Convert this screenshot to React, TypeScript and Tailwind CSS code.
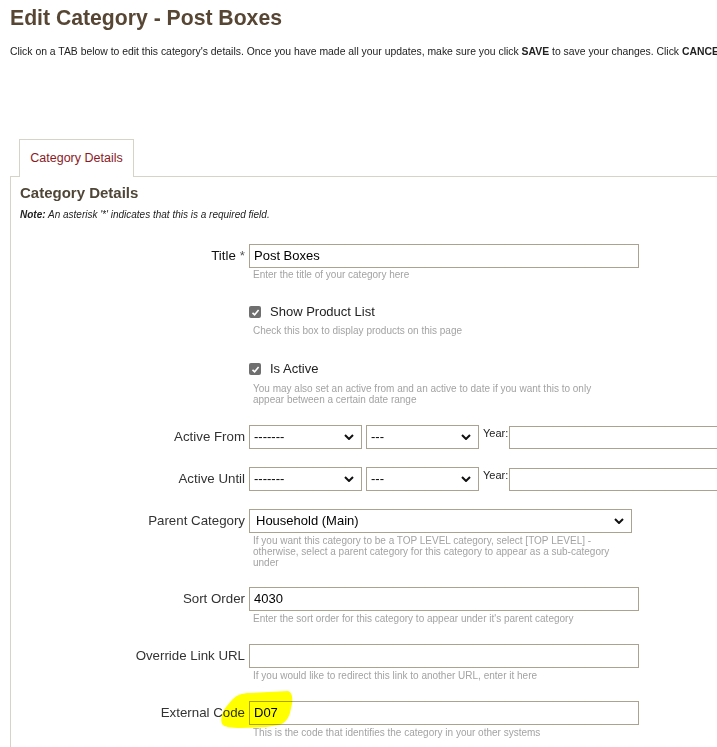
import React from "react"

const borderTan = "border-[#aba38f]"

function Chevron() {
  return (
    <svg width="10" height="6" viewBox="0 0 10 6" className="shrink-0">
      <path d="M1 1 L5 5 L9 1" fill="none" stroke="#111" strokeWidth="2" />
    </svg>
  )
}

function FakeSelect({ value, className }: { value: string; className: string }) {
  return (
    <div
      className={`flex h-[24px] items-center justify-between border ${borderTan} bg-white pr-[7px] text-[13px] text-black ${className}`}
    >
      <span>{value}</span>
      <Chevron />
    </div>
  )
}

function TextBox({ value, className = "w-[390px]" }: { value?: string; className?: string }) {
  return (
    <div
      className={`flex h-[24px] items-center border ${borderTan} bg-white pl-[4px] text-[13px] text-black ${className}`}
    >
      {value}
    </div>
  )
}

function CheckBox() {
  return (
    <span className="flex h-[12px] w-[12px] items-center justify-center rounded-[2px] bg-[#6f6f6f]">
      <svg width="9" height="9" viewBox="0 0 9 9">
        <path d="M1.5 4.8 L3.6 6.8 L7.6 2" fill="none" stroke="#fff" strokeWidth="1.6" />
      </svg>
    </span>
  )
}

function Help({ children, className = "mt-[1px]" }: { children: React.ReactNode; className?: string }) {
  return (
    <p className={`col-start-2 pl-[4px] text-[10px] leading-[11px] text-[#a3a3a3] ${className}`}>
      {children}
    </p>
  )
}

function Label({ children }: { children: React.ReactNode }) {
  return (
    <div className="flex h-[24px] items-center justify-end text-[13.3px] text-[#333]">
      {children}
    </div>
  )
}

function DateRow({ label, className }: { label: string; className: string }) {
  return (
    <div className={`col-span-2 grid grid-cols-[234px_1fr] gap-x-[4px] ${className}`}>
      <Label>{label}</Label>
      <div className="flex items-start gap-[4px]">
        <FakeSelect value="-------" className="w-[113px] pl-[4px]" />
        <FakeSelect value="---" className="w-[113px] pl-[4px]" />
        <div className="flex items-start">
          <span className="w-[26px] pt-[2px] text-[11px] leading-[13px] text-[#222]">Year:</span>
          <div className={`mt-px h-[23px] w-[260px] border ${borderTan} bg-white`} />
        </div>
      </div>
    </div>
  )
}

export default function App() {
  return (
    <div className="relative min-h-[747px] w-full overflow-hidden bg-white font-['Liberation_Sans',Arial,sans-serif] text-[#222]">
      <h1 className="px-[10px] pt-[6px] text-[21.2px] font-bold leading-[24px] text-[#574634]">
        Edit Category - Post Boxes
      </h1>
      <p className="mt-[16px] whitespace-nowrap px-[10px] text-[10.4px] leading-[12px] text-[#222]">
        Click on a TAB below to edit this category's details. Once you have made all your updates, make
        sure you click <b>SAVE</b> to save your changes. Click <b>CANCEL</b> to discard them.
      </p>

      <div className="ml-[10px] mt-[81px]">
        {/* Tab */}
        <div className="relative z-10 -mb-px ml-[9px] flex h-[38px] w-[115px] items-center justify-center border border-b-0 border-[#d6d3c7] bg-white text-[12.5px] text-[#8b1a1f]">
          Category Details
        </div>

        {/* Panel */}
        <div className="w-[800px] border-l border-t border-[#d6d3c7] pb-[20px]">
          <h2 className="pl-[9px] pt-[7px] text-[15px] font-bold leading-[18px] text-[#4f4638]">
            Category Details
          </h2>
          <p className="mt-[7px] pl-[9px] text-[10px] italic leading-[11px] text-[#222]">
            <b>Note:</b> An asterisk '*' indicates that this is a required field.
          </p>

          <div className="mt-[24px] grid grid-cols-[234px_1fr] gap-x-[4px]">
            {/* Title */}
            <Label>
              <span className="text-[#111]">Title</span>
              <span className="ml-[4px] text-[#555]">*</span>
            </Label>
            <TextBox value="Post Boxes" />
            <Help>Enter the title of your category here</Help>

            {/* Show Product List */}
            <div className="col-start-2 mt-[24px] flex h-[16px] items-center gap-[9px] text-[13px] text-[#222]">
              <CheckBox />
              <span>Show Product List</span>
            </div>
            <Help className="mt-[5px]">Check this box to display products on this page</Help>

            {/* Is Active */}
            <div className="col-start-2 mt-[25px] flex h-[16px] items-center gap-[9px] text-[13px] text-[#222]">
              <CheckBox />
              <span>Is Active</span>
            </div>
            <Help className="mt-[6px]">
              You may also set an active from and an active to date if you want this to only
              <br />
              appear between a certain date range
            </Help>

            <DateRow label="Active From" className="mt-[20px]" />
            <DateRow label="Active Until" className="mt-[18px]" />

            {/* Parent Category */}
            <div className="col-span-2 mt-[18px] grid grid-cols-[234px_1fr] gap-x-[4px]">
              <Label>Parent Category</Label>
              <FakeSelect value="Household (Main)" className="w-[383px] pl-[6px]" />
              <Help className="mt-[2px]">
                If you want this category to be a TOP LEVEL category, select [TOP LEVEL] -
                <br />
                otherwise, select a parent category for this category to appear as a sub-category
                <br />
                under
              </Help>
            </div>

            {/* Sort Order */}
            <div className="col-span-2 mt-[19px] grid grid-cols-[234px_1fr] gap-x-[4px]">
              <Label>Sort Order</Label>
              <TextBox value="4030" />
              <Help className="mt-[2px]">Enter the sort order for this category to appear under it's parent category</Help>
            </div>

            {/* Override Link URL */}
            <div className="col-span-2 mt-[20px] grid grid-cols-[234px_1fr] gap-x-[4px]">
              <Label>Override Link URL</Label>
              <TextBox />
              <Help className="mt-[2px]">If you would like to redirect this link to another URL, enter it here</Help>
            </div>

            {/* External Code */}
            <div className="col-span-2 mt-[20px] grid grid-cols-[234px_1fr] gap-x-[4px]">
              <Label>External Code</Label>
              <TextBox value="D07" />
              <Help className="mt-[2px]">This is the code that identifies the category in your other systems</Help>
            </div>
          </div>
        </div>
      </div>

      {/* highlighter mark */}
      <svg
        className="pointer-events-none absolute left-0 top-0 mix-blend-multiply"
        width="717"
        height="747"
        viewBox="0 0 717 747"
      >
        <path
          d="M231 701 C236 695 242 693 250 693 L288 691 C292 692 293 698 292 704 L290 713 C288 719 285 723 279 725 L266 727 L241 728 C231 728 224 727 222 724 C220 719 222 712 226 707 Z"
          fill="#ffff00"
        />
      </svg>
    </div>
  )
}
